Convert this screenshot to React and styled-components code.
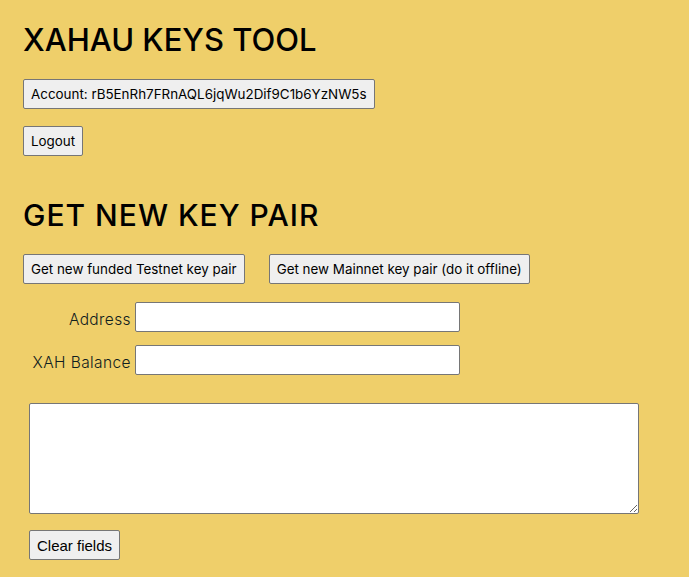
import React, { useState } from "react";
import styled, { createGlobalStyle } from "styled-components";

const GlobalStyle = createGlobalStyle`
  html, body {
    margin: 0;
    padding: 0;
    background: #efcf6a;
  }
  body {
    font-family: "Inter", "Noto Sans", sans-serif;
    color: #000;
  }
`;

const Page = styled.div`
  display: flex;
  flex-direction: column;
  align-items: flex-start;
  padding: 20px 23px 16px 23px;
  min-height: 577px;
  box-sizing: border-box;
`;

const Title = styled.h1`
  margin: 0 0 19px 0;
  font-size: ${(p) => p.size || 31}px;
  font-weight: 500;
  line-height: 40px;
  letter-spacing: ${(p) => p.spacing || 0}px;
`;

const Button = styled.button`
  font-family: "Inter", "Noto Sans", sans-serif;
  font-size: 13.4px;
  color: #000;
  background: #efefef;
  border: 1px solid #767676;
  border-radius: 2px;
  height: 30px;
  padding: 0 7px;
  cursor: pointer;
`;

const Stack = styled.div`
  display: flex;
  flex-direction: column;
  align-items: flex-start;
  gap: 17px;
  margin-bottom: 39px;
`;

const ButtonRow = styled.div`
  display: flex;
  gap: 24px;
  margin-bottom: 18px;
`;

const Fields = styled.div`
  display: grid;
  grid-template-columns: 108px 325px;
  column-gap: 4px;
  row-gap: 13px;
  align-items: center;
  margin-bottom: 28px;
`;

const Label = styled.label`
  text-align: right;
  font-size: 15.5px;
  font-weight: 300;
  letter-spacing: 0.4px;
  color: #102020;
  padding-top: 4px;
`;

const Input = styled.input`
  box-sizing: border-box;
  height: 30px;
  width: 325px;
  border: 1px solid #767676;
  border-radius: 2px;
  background: #fff;
  padding: 0 4px;
  font-size: 14px;
`;

const Lower = styled.div`
  display: flex;
  flex-direction: column;
  align-items: flex-start;
  gap: 16px;
  padding-left: 6px;
`;

const TextArea = styled.textarea`
  box-sizing: border-box;
  width: 610px;
  height: 111px;
  border: 1px solid #767676;
  border-radius: 2px;
  background: #fff;
  font-size: 14px;
`;

const ClearButton = styled(Button)`
  font-family: "Liberation Sans", Arial, sans-serif;
  font-size: 15px;
`;

export default function App() {
  const [address, setAddress] = useState("");
  const [balance, setBalance] = useState("");
  const [notes, setNotes] = useState("");

  return (
    <>
      <GlobalStyle />
      <Page>
        <Title>XAHAU KEYS TOOL</Title>
        <Stack>
          <Button>Account: rB5EnRh7FRnAQL6jqWu2Dif9C1b6YzNW5s</Button>
          <Button>Logout</Button>
        </Stack>

        <Title as="h2" size={30} spacing={1}>GET NEW KEY PAIR</Title>
        <ButtonRow>
          <Button>Get new funded Testnet key pair</Button>
          <Button>Get new Mainnet key pair (do it offline)</Button>
        </ButtonRow>

        <Fields>
          <Label htmlFor="address">Address</Label>
          <Input id="address" value={address} onChange={(e) => setAddress(e.target.value)} />
          <Label htmlFor="balance">XAH Balance</Label>
          <Input id="balance" value={balance} onChange={(e) => setBalance(e.target.value)} />
        </Fields>

        <Lower>
          <TextArea value={notes} onChange={(e) => setNotes(e.target.value)} />
          <ClearButton
            onClick={() => {
              setAddress("");
              setBalance("");
              setNotes("");
            }}
          >
            Clear fields
          </ClearButton>
        </Lower>
      </Page>
    </>
  );
}
